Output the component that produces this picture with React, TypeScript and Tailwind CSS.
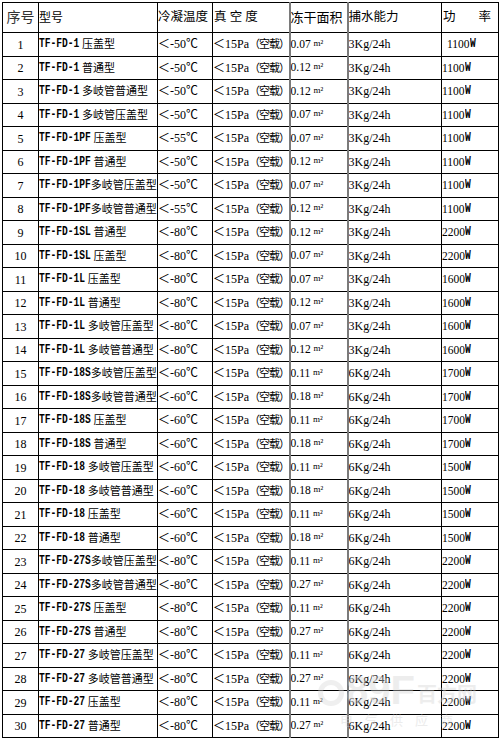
import React from 'react';

type Row = { model: string; kind: string; temp: string; area: string; cap: string; power: string };

const rows: Row[] = [
  { model: 'TF-FD-1', kind: ' 压盖型', temp: '-50℃', area: '0.07', cap: '3Kg/24h', power: '1100W' },
  { model: 'TF-FD-1', kind: ' 普通型', temp: '-50℃', area: '0.12', cap: '3Kg/24h', power: '1100W' },
  { model: 'TF-FD-1', kind: ' 多岐管普通型', temp: '-50℃', area: '0.12', cap: '3Kg/24h', power: '1100W' },
  { model: 'TF-FD-1', kind: ' 多岐管压盖型', temp: '-50℃', area: '0.07', cap: '3Kg/24h', power: '1100W' },
  { model: 'TF-FD-1PF', kind: ' 压盖型', temp: '-55℃', area: '0.07', cap: '3Kg/24h', power: '1100W' },
  { model: 'TF-FD-1PF', kind: ' 普通型', temp: '-50℃', area: '0.12', cap: '3Kg/24h', power: '1100W' },
  { model: 'TF-FD-1PF', kind: '多岐管压盖型', temp: '-50℃', area: '0.07', cap: '3Kg/24h', power: '1100W' },
  { model: 'TF-FD-1PF', kind: '多岐管普通型', temp: '-55℃', area: '0.12', cap: '3Kg/24h', power: '1100W' },
  { model: 'TF-FD-1SL', kind: ' 普通型', temp: '-80℃', area: '0.12', cap: '3Kg/24h', power: '2200W' },
  { model: 'TF-FD-1SL', kind: ' 压盖型', temp: '-80℃', area: '0.07', cap: '3Kg/24h', power: '2200W' },
  { model: 'TF-FD-1L', kind: ' 压盖型', temp: '-80℃', area: '0.07', cap: '3Kg/24h', power: '1600W' },
  { model: 'TF-FD-1L', kind: ' 普通型', temp: '-80℃', area: '0.12', cap: '3Kg/24h', power: '1600W' },
  { model: 'TF-FD-1L', kind: ' 多岐管压盖型', temp: '-80℃', area: '0.07', cap: '3Kg/24h', power: '1600W' },
  { model: 'TF-FD-1L', kind: ' 多岐管普通型', temp: '-80℃', area: '0.12', cap: '3Kg/24h', power: '1600W' },
  { model: 'TF-FD-18S', kind: '多岐管压盖型', temp: '-60℃', area: '0.11', cap: '6Kg/24h', power: '1700W' },
  { model: 'TF-FD-18S', kind: '多岐管普通型', temp: '-60℃', area: '0.18', cap: '6Kg/24h', power: '1700W' },
  { model: 'TF-FD-18S', kind: ' 压盖型', temp: '-60℃', area: '0.11', cap: '6Kg/24h', power: '1700W' },
  { model: 'TF-FD-18S', kind: ' 普通型', temp: '-60℃', area: '0.18', cap: '6Kg/24h', power: '1700W' },
  { model: 'TF-FD-18', kind: ' 多岐管压盖型', temp: '-60℃', area: '0.11', cap: '6Kg/24h', power: '1500W' },
  { model: 'TF-FD-18', kind: ' 多岐管普通型', temp: '-60℃', area: '0.18', cap: '6Kg/24h', power: '1500W' },
  { model: 'TF-FD-18', kind: ' 压盖型', temp: '-60℃', area: '0.11', cap: '6Kg/24h', power: '1500W' },
  { model: 'TF-FD-18', kind: ' 普通型', temp: '-60℃', area: '0.18', cap: '6Kg/24h', power: '1500W' },
  { model: 'TF-FD-27S', kind: '多岐管压盖型', temp: '-80℃', area: '0.11', cap: '6Kg/24h', power: '2200W' },
  { model: 'TF-FD-27S', kind: '多岐管普通型', temp: '-80℃', area: '0.27', cap: '6Kg/24h', power: '2200W' },
  { model: 'TF-FD-27S', kind: ' 压盖型', temp: '-80℃', area: '0.11', cap: '6Kg/24h', power: '2200W' },
  { model: 'TF-FD-27S', kind: ' 普通型', temp: '-80℃', area: '0.27', cap: '6Kg/24h', power: '2200W' },
  { model: 'TF-FD-27', kind: ' 多岐管压盖型', temp: '-80℃', area: '0.11', cap: '6Kg/24h', power: '2200W' },
  { model: 'TF-FD-27', kind: ' 多岐管普通型', temp: '-80℃', area: '0.27', cap: '6Kg/24h', power: '2200W' },
  { model: 'TF-FD-27', kind: ' 压盖型', temp: '-80℃', area: '0.11', cap: '6Kg/24h', power: '2200W' },
  { model: 'TF-FD-27', kind: ' 普通型', temp: '-80℃', area: '0.27', cap: '6Kg/24h', power: '2200W' },
];

const cjk = { fontFamily: '"Liberation Serif", "Noto Sans CJK SC", serif' } as React.CSSProperties;
const mono = { fontFamily: '"Liberation Mono", monospace' } as React.CSSProperties;

const cell = 'border border-black p-0 align-middle whitespace-nowrap overflow-hidden';
const grayL = 'border-l-2 border-l-[#7a7a7a]';

// narrow fixed-width latin, like the bitmap font in the source sheet
function Narrow({ text }: { text: string }) {
  return (
    <span className="inline-block align-middle overflow-visible" style={{ width: text.length * 5.75 }}>
      <span style={mono} className="inline-block text-[12px] font-bold leading-none origin-left scale-x-[0.8]">
        {text}
      </span>
    </span>
  );
}

export default function App() {
  return (
    <div className="relative w-[500px] h-[741px] bg-white text-black" style={cjk}>
      <div className="pt-[2px] pl-[2px]">
        <table className="border-collapse table-fixed w-[496px] text-[13px] leading-none">
          <colgroup>
            <col className="w-[36px]" />
            <col className="w-[119px]" />
            <col className="w-[55px]" />
            <col className="w-[77px]" />
            <col className="w-[58px]" />
            <col className="w-[94px]" />
            <col className="w-[57px]" />
          </colgroup>
          <thead>
            <tr className="h-[30px]">
              <th className={`${cell} font-normal text-[14px] text-center text-[#333]`}>序号</th>
              <th className={`${cell} font-normal text-[12px] text-left`}>型号</th>
              <th className={`${cell} font-normal text-[12.5px] text-left`}>冷凝温度</th>
              <th className={`${cell} font-normal text-[12.5px] text-left pl-[1px]`}>真 空 度</th>
              <th className={`${cell} ${grayL} font-normal text-[13px] text-left`}>冻干面积</th>
              <th className={`${cell} ${grayL} font-normal text-[12.5px] text-left`}>捕水能力</th>
              <th className={`${cell} font-normal text-[12.5px] text-left`}>
                <span className="pl-[1px]">功</span>
                <span className="pl-[23px]">率</span>
              </th>
            </tr>
          </thead>
          <tbody>
            {rows.map((r, i) => (
              <tr key={i} className="h-[23.5px]">
                <td className={`${cell} text-center text-[12px] pt-[1px]`}>{i + 1}</td>
                <td className={`${cell} text-left text-[11px]`}>
                  <Narrow text={r.model} />
                  <span className="whitespace-pre align-middle">{r.kind}</span>
                </td>
                <td className={`${cell} text-left text-[12px]`}>＜{r.temp}</td>
                <td className={`${cell} text-left text-[12px]`}>
                  ＜15Pa<span className="text-[11px] tracking-[-1px]">（空载）</span>
                </td>
                <td className={`${cell} ${grayL} text-left text-[11.5px]`}>
                  {r.area} <span className="text-[9px] align-top">m²</span>
                </td>
                <td className={`${cell} ${grayL} text-left text-[12px]`}>{r.cap}</td>
                <td className={`${cell} text-left text-[11.5px] ${i === 0 ? 'pl-[5px]' : ''}`}>
                  <span className="align-middle">{r.power.slice(0, 4)}</span>
                  <Narrow text="W" />
                </td>
              </tr>
            ))}
          </tbody>
        </table>
      </div>

      {/* watermark */}
      <div className="absolute left-[318px] top-[670px] pointer-events-none select-none opacity-40">
        <div className="flex items-end gap-[2px] text-[#d4d4d4]">
          <div className="w-[26px] h-[26px] rounded-full border-[5px] border-[#d8d8d8] mb-[4px]" />
          <span className="text-[40px] font-bold leading-none" style={{ fontFamily: '"Liberation Sans", sans-serif' }}>
            89F
          </span>
          <span className="text-[20px] font-bold leading-none mb-[6px]" style={{ fontFamily: '"Noto Sans CJK SC", sans-serif' }}>
            百方网
          </span>
        </div>
        <div className="pl-[22px] text-[13px] tracking-[12px] text-[#d0d0d0]" style={{ fontFamily: '"Noto Sans CJK SC", sans-serif' }}>
          电气供应商
        </div>
      </div>
    </div>
  );
}
